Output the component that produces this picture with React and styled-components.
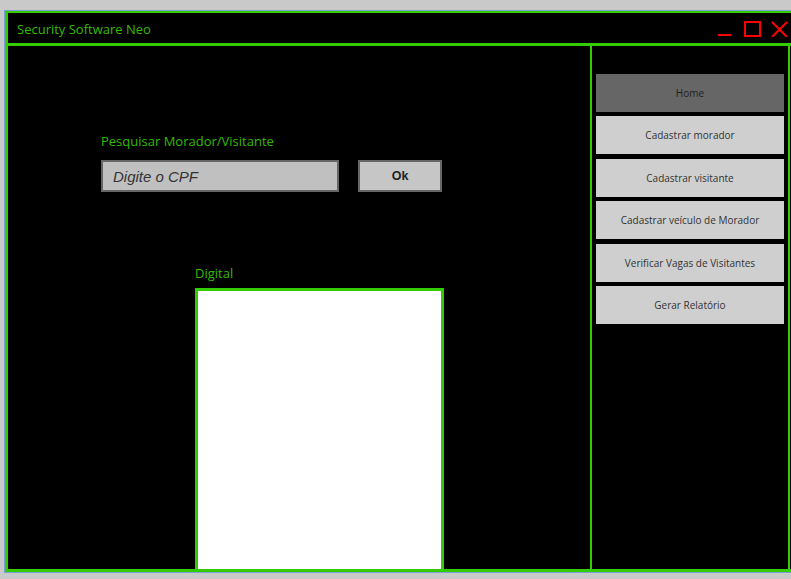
import React from "react";
import styled, { createGlobalStyle } from "styled-components";

const GREEN = "#33cc00";

const GlobalStyle = createGlobalStyle`
  html, body {
    margin: 0;
    padding: 0;
    background: #c9c9c9;
    overflow: hidden;
  }
  * { box-sizing: border-box; }
`

const Window = styled.div`
  margin: 10px 0 0 4px;
  width: 787px;
  border: 1px solid #7b9ed6;
  border-right: none;
  background: #000;
`
const Frame = styled.div`
  border: 3px solid ${GREEN};
  border-top-width: 2px;
  border-right: none;
  display: flex;
  flex-direction: column;
`
const TitleBar = styled.div`
  height: 30px;
  border-bottom: 3px solid ${GREEN};
  box-sizing: content-box;
  display: flex;
  align-items: center;
  justify-content: space-between;
  padding: 0 3px 0 9px;
  h1{
    margin: 2px 0 0;
    font-family: "Open Sans", sans-serif;
    font-weight: 400;
    font-size: 13px;
    color: #33bb00;
  }
`
const Controls = styled.div`
  display: flex;
  align-items: center;
  gap: 9px;
  svg{
    display: block;
  }
`
const Body = styled.div`
  display: flex;
  height: 523px;
`
const Main = styled.div`
  width: 582px;
  display: flex;
  flex-direction: column;
  padding-top: 87px;
`
const Label = styled.div`
  font-family: "Open Sans", sans-serif;
  font-size: 13px;
  line-height: 17px;
  color: #33bb00;
`
const SearchGroup = styled.div`
  margin-left: 93px;
  display: flex;
  flex-direction: column;
  gap: 10px;
`
const SearchRow = styled.div`
  display: flex;
  gap: 19px;
`
const Input = styled.input`
  width: 238px;
  height: 32px;
  border: 2px solid #666;
  background: #c0c0c0;
  padding: 0 10px;
  font-family: "Liberation Sans", Arial, sans-serif;
  font-style: italic;
  font-size: 15px;
  color: #333;
  outline: none;
  &::placeholder{
    color: #333;
  }
`
const OkButton = styled.button`
  width: 84px;
  height: 32px;
  border: 2px solid #666;
  background: #c6c6c6;
  font-family: "Liberation Sans", Arial, sans-serif;
  font-weight: 700;
  font-size: 12.5px;
  color: #222;
  padding: 0;
`
const DigitalGroup = styled.div`
  margin: 73px 0 0 187px;
  width: 249px;
  flex: 1;
  display: flex;
  flex-direction: column;
  gap: 6px;
`
const DigitalBox = styled.div`
  flex: 1;
  background: #fff;
  border: 3px solid ${GREEN};
  border-bottom: none;
`
const Sidebar = styled.div`
  width: 200px;
  border-left: 2px solid ${GREEN};
  border-right: 2px solid ${GREEN};
  padding: 28px 4px 0;
  display: flex;
  flex-direction: column;
  gap: 4.4px;
`
const NavButton = styled.div`
  height: 38px;
  display: flex;
  align-items: center;
  justify-content: center;
  background: ${(p) => (p.active ? "#666" : "#cfcfcf")};
  color: ${(p) => (p.active ? "#1e1e1e" : "#333")};
  font-family: "Open Sans", sans-serif;
  font-size: 10px;
  cursor: pointer;
`

const items = [
  "Home",
  "Cadastrar morador",
  "Cadastrar visitante",
  "Cadastrar veículo de Morador",
  "Verificar Vagas de Visitantes",
  "Gerar Relatório",
];

const App = () => {
  return (
    <>
      <GlobalStyle />
      <Window>
        <Frame>
          <TitleBar>
            <h1>Security Software Neo</h1>
            <Controls>
              <svg width="18" height="18" viewBox="0 0 18 18">
                <line x1="2" y1="16" x2="15" y2="16" stroke="#ff0000" strokeWidth="2" />
              </svg>
              <svg width="18" height="18" viewBox="0 0 18 18">
                <rect x="2" y="3" width="15" height="14" fill="none" stroke="#ff0000" strokeWidth="2" />
              </svg>
              <svg width="18" height="18" viewBox="0 0 18 18">
                <line x1="2" y1="3" x2="17" y2="18" stroke="#ff0000" strokeWidth="2" />
                <line x1="17" y1="3" x2="2" y2="18" stroke="#ff0000" strokeWidth="2" />
              </svg>
            </Controls>
          </TitleBar>
          <Body>
            <Main>
              <SearchGroup>
                <Label>Pesquisar Morador/Visitante</Label>
                <SearchRow>
                  <Input placeholder="Digite o CPF" />
                  <OkButton>Ok</OkButton>
                </SearchRow>
              </SearchGroup>
              <DigitalGroup>
                <Label>Digital</Label>
                <DigitalBox />
              </DigitalGroup>
            </Main>
            <Sidebar>
              {items.map((item, index) => (
                <NavButton key={index} active={index === 0}>{item}</NavButton>
              ))}
            </Sidebar>
          </Body>
        </Frame>
      </Window>
    </>
  );
}

export default App;
